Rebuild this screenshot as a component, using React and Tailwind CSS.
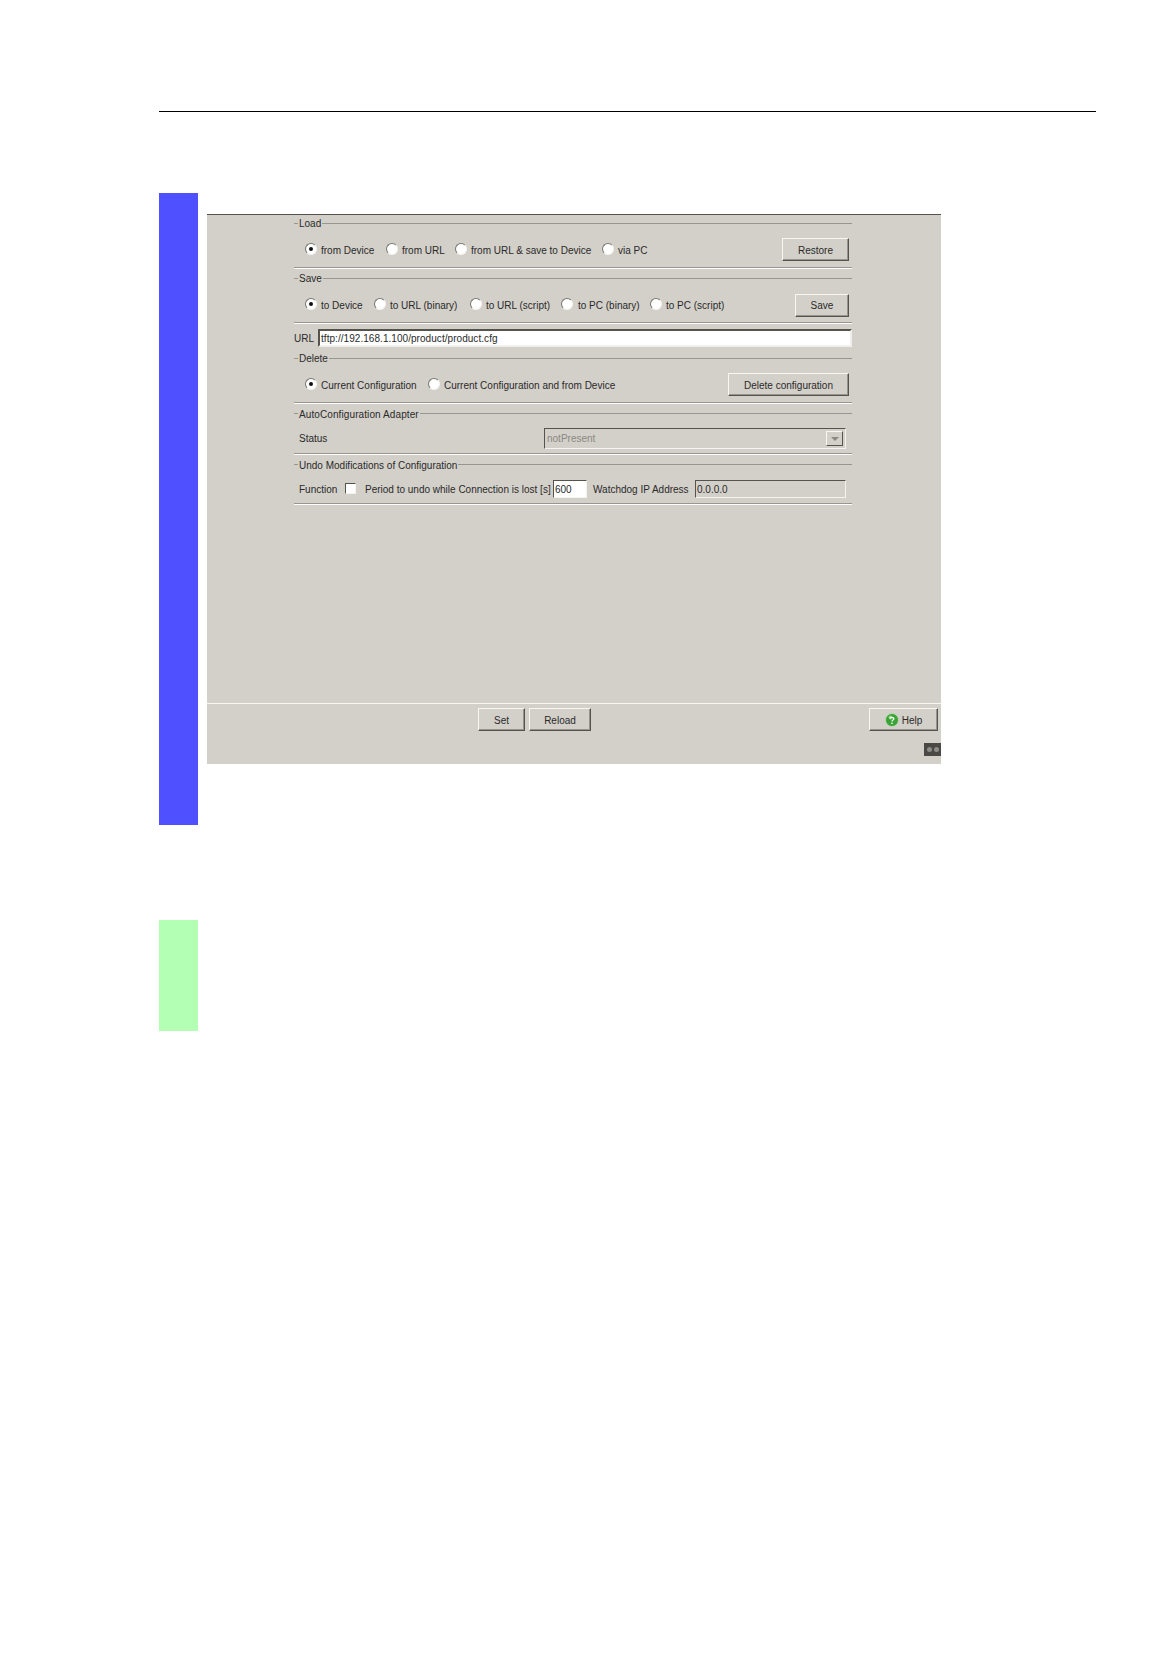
const Radio = ({ checked }) => (
  <span className="relative block w-[12px] h-[12px] mb-[2px] shrink-0 rounded-full bg-white border border-[#f4f3f0] border-l-[#77756f] border-t-[#77756f]">
    {checked && (
      <span className="absolute left-[3px] top-[3px] w-[4px] h-[4px] rounded-full bg-[#111]" />
    )}
  </span>
);

// radio plus label, gap and width come from the caller
const Option = ({ label, checked, gap, width }) => (
  <div className={`flex items-center ${width}`}>
    <Radio checked={checked} />
    <span className={`${gap} pt-[2px] whitespace-nowrap`}>{label}</span>
  </div>
);

const Button = ({ className = "", children }) => (
  <button
    type="button"
    className={`flex items-center justify-center shrink-0 pt-[2px] bg-[#d3d0c9] text-[#2a2a2a] border border-[#f7f6f3] border-r-[#55534e] border-b-[#55534e] shadow-[inset_-1px_-1px_0_#96948d] ${className}`}
  >
    {children}
  </button>
);

const Etched = () => <div className="h-[2px] border-t border-b border-t-[#98968f] border-b-white" />;

const Header = ({ label, className, labelClass = "" }) => (
  <div className={`flex items-center ${className}`}>
    <div className="w-[4px] h-[2px] border-t border-[#98968f] mr-px" />
    <span className={`whitespace-nowrap ${labelClass}`}>{label}</span>
    <div className="flex-1 h-[2px] ml-px border-t border-[#98968f]" />
  </div>
);

const HelpIcon = () => (
  <svg width="14" height="14" viewBox="0 0 14 14" className="mr-[3px] mb-[2px]">
    <circle cx="7" cy="7" r="6.5" fill="#3aa335" stroke="#bcd6b4" strokeWidth="1" />
    <circle cx="5.5" cy="4.5" r="2" fill="#8fd888" />
    <path d="M5 5.3c.2-1.3 3.8-1.5 3.9.3.1 1.4-1.9 1.3-1.9 2.9" fill="none" stroke="#fff" strokeWidth="1.3" />
    <rect x="6.3" y="9.6" width="1.4" height="1.4" fill="#fff" />
  </svg>
);

export default function App() {
  return (
    <div className="min-h-screen bg-white pt-[111px] pl-[159px] font-['Liberation_Sans',Arial,sans-serif] text-[10px] leading-none text-[#2a2a2a]">
      <div className="w-[937px] h-px bg-black" />

      <div className="flex gap-[9px] mt-[81px]">
        <div className="w-[39px] h-[632px] bg-[#4f50ff]" />

        <div className="mt-[21px] w-[734px] h-[550px] flex flex-col bg-[#d3d0c9] border-t border-[#55534e]">
          <div className="flex-1 pl-[87px]">
            <div className="w-[558px]">
              {/* Load */}
              <Header label="Load" className="h-[17px]" />
              <div className="h-[35px] flex items-center pl-[11px] pr-[3px]">
                <Option label="from Device" checked gap="ml-[4px]" width="w-[81px]" />
                <Option label="from URL" gap="ml-[4px]" width="w-[69px]" />
                <Option label="from URL & save to Device" gap="ml-[4px]" width="w-[147px]" />
                <Option label="via PC" gap="ml-[4px]" width="w-[60px]" />
                <Button className="ml-auto w-[67px] h-[23px]">Restore</Button>
              </div>
              <Etched />

              {/* Save */}
              <Header label="Save" className="h-[19px]" />
              <div className="h-[34px] flex items-center pl-[11px] pr-[3px]">
                <Option label="to Device" checked gap="ml-[4px]" width="w-[69px]" />
                <Option label="to URL (binary)" gap="ml-[4px]" width="w-[96px]" />
                <Option label="to URL (script)" gap="ml-[4px]" width="w-[91px]" />
                <Option label="to PC (binary)" gap="ml-[5px]" width="w-[89px]" />
                <Option label="to PC (script)" gap="ml-[4px]" width="w-[80px]" />
                <Button className="ml-auto w-[54px] h-[23px]">Save</Button>
              </div>
              <Etched />

              {/* URL */}
              <div className="h-[28px] flex items-center">
                <span className="w-[24px] pt-[2px]">URL</span>
                <div className="flex-1 h-[18px] flex items-center pl-[1px] pt-[2px] tracking-[0.05px] bg-white border-2 border-[#f0efeb] border-l-[#55534e] border-t-[#55534e]">
                  tftp://192.168.1.100/product/product.cfg
                </div>
              </div>

              {/* Delete */}
              <Header label="Delete" className="h-[14px]" />
              <div className="h-[36px] flex items-center pt-px pl-[11px] pr-[3px]">
                <Option label="Current Configuration" checked gap="ml-[4px]" width="w-[123px]" />
                <Option label="Current Configuration and from Device" gap="ml-[4px]" width="w-[200px]" />
                <Button className="ml-auto w-[121px] h-[23px]">Delete configuration</Button>
              </div>
              <Etched />

              {/* AutoConfiguration Adapter */}
              <Header label="AutoConfiguration Adapter" className="h-[20px]" labelClass="pt-[2px] tracking-[0.1px]" />
              <div className="h-[29px] flex items-center pl-[5px] pr-[6px]">
                <span className="w-[245px]">Status</span>
                <div className="flex-1 h-[21px] flex items-center pl-[2px] pr-[2px] bg-[#d3d0c9] border border-[#f4f3f0] border-l-[#55534e] border-t-[#55534e] text-[#8b8983]">
                  <span>notPresent</span>
                  <div className="ml-auto w-[17px] h-[15px] flex items-center justify-center border border-[#f7f6f3] border-r-[#55534e] border-b-[#55534e]">
                    <div className="w-0 h-0 border-x-[4px] border-x-transparent border-t-[4px] border-t-[#8b8983]" />
                  </div>
                </div>
              </div>
              <Etched />

              {/* Undo */}
              <Header label="Undo Modifications of Configuration" className="h-[20px]" labelClass="pt-[2px]" />
              <div className="h-[28px] flex items-center pl-[5px] pr-[6px]">
                <span className="w-[46px] pt-[2px]">Function</span>
                <div className="w-[11px] h-[11px] mb-[2px] bg-white border border-[#f4f3f0] border-l-[#55534e] border-t-[#55534e]" />
                <span className="ml-[9px] w-[188px] pt-[2px] whitespace-nowrap">Period to undo while Connection is lost [s]</span>
                <div className="w-[34px] h-[18px] flex items-center pl-px pt-[2px] bg-white border border-[#f4f3f0] border-l-[#55534e] border-t-[#55534e]">
                  600
                </div>
                <span className="ml-[6px] w-[102px] pt-[2px] whitespace-nowrap">Watchdog IP Address</span>
                <div className="flex-1 h-[18px] flex items-center pl-px pt-[2px] border border-[#f4f3f0] border-l-[#55534e] border-t-[#55534e]">
                  0.0.0.0
                </div>
              </div>
              <Etched />
            </div>
          </div>

          {/* Footer */}
          <div className="h-[61px] border-t border-[#f7f6f3]">
            <div className="flex pt-[4px] pl-[271px] pr-[3px]">
              <Button className="w-[47px] h-[23px]">Set</Button>
              <Button className="ml-[4px] w-[62px] h-[23px]">Reload</Button>
              <Button className="ml-auto w-[69px] h-[23px]">
                <HelpIcon />
                Help
              </Button>
            </div>
            <div className="flex justify-end mt-[12px]">
              <div className="w-[17px] h-[13px] flex items-center justify-center gap-[2px] bg-[#4a4946]">
                <span className="w-[5px] h-[5px] rounded-full bg-[#8d8c88]" />
                <span className="w-[5px] h-[5px] rounded-full bg-[#8d8c88]" />
              </div>
            </div>
          </div>
        </div>
      </div>

      <div className="w-[39px] h-[111px] mt-[95px] bg-[#b3ffb3]" />
    </div>
  );
}
